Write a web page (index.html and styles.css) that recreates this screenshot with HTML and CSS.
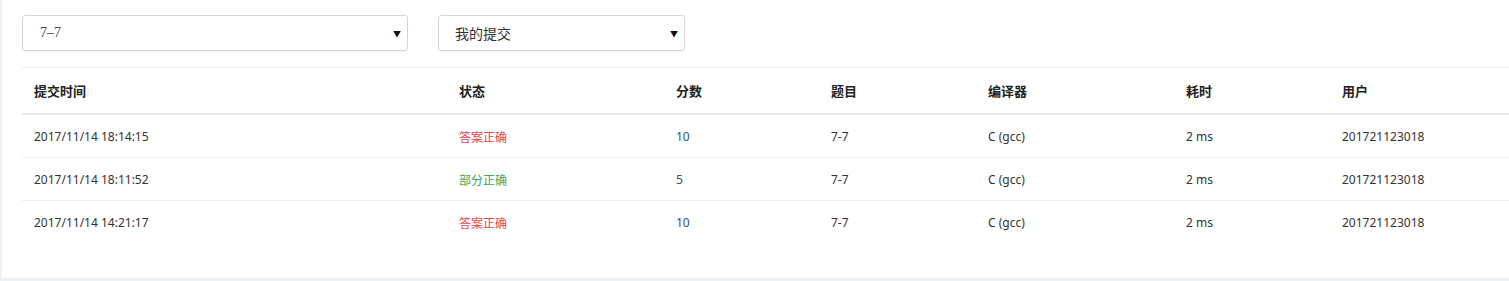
FILE: index.html
```html
<!DOCTYPE html>
<html>
<head>
<meta charset="utf-8">
<link rel="stylesheet" href="styles.css">
</head>
<body>
<div class="card">
  <div class="filters">
    <div class="select select-problem"><span class="val serif">7–7</span><span class="caret">▼</span></div>
    <div class="select select-scope"><span class="val">我的提交</span><span class="caret">▼</span></div>
  </div>
  <table class="subs">
    <colgroup>
      <col class="c1"><col class="c2"><col class="c3"><col class="c4"><col class="c5"><col class="c6"><col class="c7">
    </colgroup>
    <thead>
      <tr><th>提交时间</th><th>状态</th><th>分数</th><th>题目</th><th>编译器</th><th>耗时</th><th>用户</th></tr>
    </thead>
    <tbody>
      <tr><td>2017/11/14 18:14:15</td><td class="ok">答案正确</td><td class="score">10</td><td>7-7</td><td>C (gcc)</td><td>2 ms</td><td>201721123018</td></tr>
      <tr><td>2017/11/14 18:11:52</td><td class="part">部分正确</td><td class="score">5</td><td>7-7</td><td>C (gcc)</td><td>2 ms</td><td>201721123018</td></tr>
      <tr><td>2017/11/14 14:21:17</td><td class="ok">答案正确</td><td class="score">10</td><td>7-7</td><td>C (gcc)</td><td>2 ms</td><td>201721123018</td></tr>
    </tbody>
  </table>
</div>
</body>
</html>
```
FILE: styles.css
```css
html, body { margin: 0; padding: 0; }
body {
  background: #eef0f2;
  font-family: "Noto Sans", "Noto Sans CJK SC", sans-serif;
  font-size: 12px;
  color: #333;
  overflow: hidden;
}
.card {
  margin-left: 2px;
  width: 1520px;
  height: 278px;
  background: #fff;
  padding: 15px 0 0 20px;
  box-sizing: border-box;
}
.filters { display: flex; gap: 30px; }
.select {
  height: 36px;
  box-sizing: border-box;
  border: 1px solid #d4d4d4;
  border-radius: 3px;
  box-shadow: 0 1px 1px rgba(0,0,0,0.04);
  display: flex;
  align-items: center;
  justify-content: space-between;
  padding: 0 6px 0 16px;
}
.select-problem { width: 386px; padding-left: 17px; }
.select-scope { width: 247px; }
.val { font-size: 14px; color: #333; font-family: "Noto Sans CJK SC", sans-serif; }
.val.serif { font-family: "Liberation Serif", serif; font-size: 14px; color: #444; }
.caret { font-size: 8px; color: #111; }
.subs {
  margin-top: 16px;
  border-collapse: collapse;
  table-layout: fixed;
  width: 1500px;
  border-top: 1px solid #eceef0;
}
.c1 { width: 425px; } .c2 { width: 217px; } .c3 { width: 155px; }
.c4 { width: 157px; } .c5 { width: 198px; } .c6 { width: 156px; } .c7 { width: 192px; }
th {
  text-align: left;
  font-weight: bold;
  font-size: 13px;
  color: #222;
  height: 45px;
  padding: 0 12px;
  border-bottom: 2px solid #e8e9eb;
  font-family: "Noto Sans CJK SC", sans-serif;
}
td {
  height: 42px;
  padding: 0 12px;
  border-bottom: 1px solid #eeeff1;
  font-size: 12px;
  color: #333;
}
tbody tr:last-child td { border-bottom: none; }
td.ok { color: #e0474c; font-family: "Noto Sans CJK SC", sans-serif; }
td.part { color: #44a556; font-family: "Noto Sans CJK SC", sans-serif; }
td.score { color: #2d5282; }
```
